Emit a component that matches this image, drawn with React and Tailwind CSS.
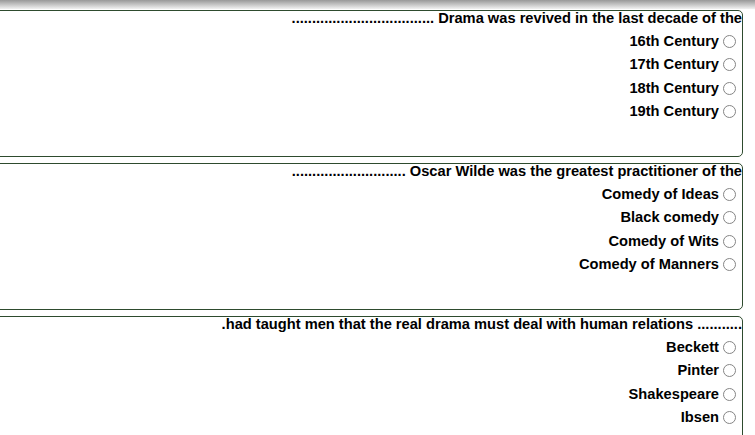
import React from "react";

const questions = [
  {
    text: "................................... Drama was revived in the last decade of the",
    options: ["16th Century", "17th Century", "18th Century", "19th Century"],
  },
  {
    text: "............................ Oscar Wilde was the greatest practitioner of the",
    options: ["Comedy of Ideas", "Black comedy", "Comedy of Wits", "Comedy of Manners"],
  },
  {
    text: ".had taught men that the real drama must deal with human relations ...........",
    options: ["Beckett", "Pinter", "Shakespeare", "Ibsen"],
  },
];

function Radio() {
  return (
    <span className="ml-[4px] mr-[6px] inline-block h-[13px] w-[13px] shrink-0 rounded-full border border-[#858585] bg-white" />
  );
}

function Question({ q }) {
  return (
    <div className="ml-[-20px] mr-[12px] h-[147px] shrink-0 overflow-hidden rounded-[5px] border border-[#2e4b2e] bg-white">
      <div className="flex justify-end whitespace-nowrap text-[14.67px] leading-[14px] font-bold text-black">
        <span>{q.text}</span>
      </div>
      <div className="mt-[5px] flex flex-col">
        {q.options.map((o) => (
          <div key={o} className="flex h-[23.3px] items-center justify-end">
            <span className="whitespace-nowrap text-[14.67px] leading-[17px] font-bold text-black">{o}</span>
            <Radio />
          </div>
        ))}
      </div>
    </div>
  );
}

export default function App() {
  return (
    <div className="h-[435px] w-[755px] overflow-hidden bg-white font-['Liberation_Sans',Arial,sans-serif]">
      <div className="h-[9px] w-full bg-gradient-to-b from-[#999999] to-[#f2f2f2]" />
      <div className="mt-[1px] flex flex-col gap-[6px]">
        {questions.map((q, i) => (
          <Question key={i} q={q} />
        ))}
      </div>
    </div>
  );
}
